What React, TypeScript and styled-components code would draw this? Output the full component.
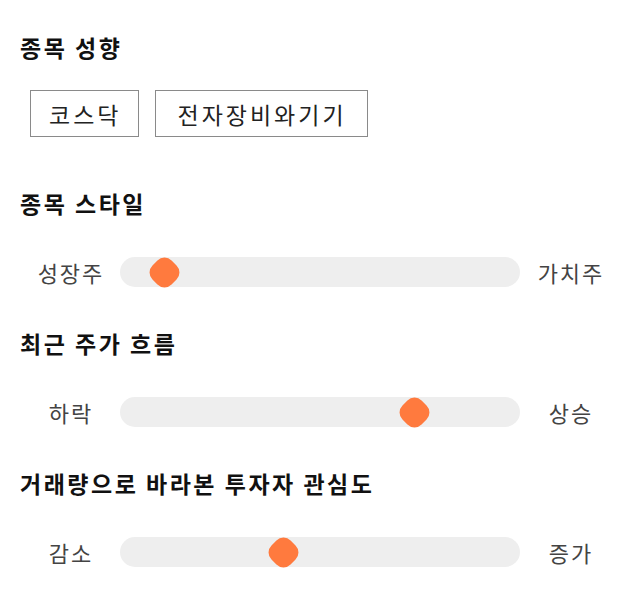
import React from "react";
import styled, { createGlobalStyle } from "styled-components";

const Global = createGlobalStyle`
  html, body { margin: 0; padding: 0; background: #fff; }
  body { font-family: "Noto Sans CJK KR", "Noto Sans", sans-serif; color: #111; }
`;

const Page = styled.div`
  width: 600px;
  padding: 30px 20px 20px;
  display: flex;
  flex-direction: column;
`;

const Section = styled.section<{ $gap: number; $after: number }>`
  display: flex;
  flex-direction: column;
  gap: ${(p) => p.$gap}px;
  margin-bottom: ${(p) => p.$after}px;
`;

const Heading = styled.h2`
  margin: 0;
  font-size: 23px;
  letter-spacing: 2.5px;
  line-height: 34px;
  font-weight: 700;
  color: #111;
`;

const ChipRow = styled.div`
  display: flex;
  gap: 16px;
  padding-left: 10px;
`;

const Chip = styled.button<{ $pad: number }>`
  height: 47px;
  padding: 0 ${(p) => p.$pad - 1}px 0 ${(p) => p.$pad}px;
  border: 1px solid #8a8a8a;
  background: #fff;
  font-family: inherit;
  font-size: 23px;
  letter-spacing: 3px;
  color: #222;
  display: flex;
  align-items: center;
  cursor: pointer;
`;

const SliderRow = styled.div`
  display: grid;
  grid-template-columns: 100px 400px 100px;
  align-items: center;
  height: 30px;
`;

const EndLabel = styled.span`
  text-align: center;
  font-size: 22px;
  letter-spacing: 2px;
  padding-left: 2px;
  color: #444;
`;

const Track = styled.div`
  position: relative;
  height: 30px;
  border-radius: 15px;
  background: #eeeeee;
`;

const Thumb = styled.span`
  position: absolute;
  top: 1.5px;
  width: 27px;
  height: 27px;
  margin-left: -13.5px;
  border-radius: 10px;
  background: #ff7a3e;
  transform: rotate(45deg);
`;

function Slider({ left, right, value }: { left: string; right: string; value: number }) {
  const x = 15 + (value / 100) * 370;
  return (
    <SliderRow>
      <EndLabel>{left}</EndLabel>
      <Track>
        <Thumb style={{ left: `${x}px` }} />
      </Track>
      <EndLabel>{right}</EndLabel>
    </SliderRow>
  );
}

export default function App() {
  return (
    <>
      <Global />
      <Page>
        <Section $gap={26} $after={49}>
          <Heading>종목 성향</Heading>
          <ChipRow>
            <Chip $pad={18}>코스닥</Chip>
            <Chip $pad={21}>전자장비와기기</Chip>
          </ChipRow>
        </Section>
        <Section $gap={36} $after={40}>
          <Heading>종목 스타일</Heading>
          <Slider left="성장주" right="가치주" value={8} />
        </Section>
        <Section $gap={36} $after={40}>
          <Heading>최근 주가 흐름</Heading>
          <Slider left="하락" right="상승" value={75.5} />
        </Section>
        <Section $gap={36} $after={0}>
          <Heading>거래량으로 바라본 투자자 관심도</Heading>
          <Slider left="감소" right="증가" value={40} />
        </Section>
      </Page>
    </>
  );
}
